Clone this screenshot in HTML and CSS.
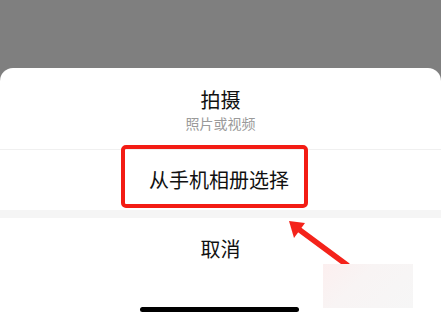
FILE: index.html
```html
<!DOCTYPE html>
<html lang="zh">
<head>
<meta charset="utf-8">
<link rel="stylesheet" href="styles.css">
</head>
<body>
<div class="screen">
  <div class="backdrop"></div>
  <div class="sheet">
    <div class="item item-main">
      <div class="title">拍摄</div>
      <div class="sub">照片或视频</div>
    </div>
    <div class="divider"></div>
    <div class="item item-album">
      <div class="title">从手机相册选择</div>
    </div>
    <div class="band"></div>
    <div class="item item-cancel">
      <div class="title">取消</div>
    </div>
    <div class="home"></div>
  </div>
  <div class="highlight"></div>
  <svg class="arrow" width="441" height="319" viewBox="0 0 441 319">
    <line x1="347" y1="265" x2="297" y2="228" stroke="#f4231b" stroke-width="5.5" stroke-linecap="round"/>
    <polygon points="289,221 305,223 294,238" fill="#f4231b"/>
  </svg>
  <div class="watermark"></div>
</div>
</body>
</html>
```
FILE: styles.css
```css
html, body {
  margin: 0;
  padding: 0;
}
body {
  background: #7f7f7f;
  font-family: "Noto Sans CJK SC", "Noto Sans", sans-serif;
}
.screen {
  position: relative;
  width: 441px;
  height: 319px;
  overflow: hidden;
  display: flex;
  flex-direction: column;
}
.backdrop {
  height: 68px;
  flex: none;
}
.sheet {
  flex: 1;
  background: #fff;
  border-radius: 13px 13px 0 0;
  display: flex;
  flex-direction: column;
}
.item {
  display: flex;
  flex-direction: column;
  align-items: center;
  justify-content: center;
}
.title {
  font-size: 20px;
  line-height: 24px;
  color: #111;
}
.sub {
  font-size: 14px;
  line-height: 18px;
  color: #9a9a9a;
  margin-top: 2px;
}
.item-main {
  height: 81px;
  padding-top: 3px;
  box-sizing: border-box;
}
.divider {
  height: 1px;
  background: #f0f0f0;
}
.item-album {
  height: 60px;
}
.item-album .title {
  margin-right: 3px;
}
.band {
  height: 8px;
  background: #f5f5f5;
}
.item-cancel {
  height: 62px;
}
.home {
  width: 159px;
  height: 5px;
  border-radius: 3px;
  background: #000;
  margin: 27px auto 0 140px;
}
.highlight {
  position: absolute;
  left: 121px;
  top: 145px;
  width: 187px;
  height: 63px;
  box-sizing: border-box;
  border: 4.5px solid #f31c14;
  border-radius: 5px;
}
.arrow {
  position: absolute;
  left: 0;
  top: 0;
}
.watermark {
  position: absolute;
  left: 323px;
  top: 264px;
  width: 90px;
  height: 44px;
  background: linear-gradient(135deg, #fcefef 0%, #f8f4f4 40%, #f6f6f6 100%);
}
```
